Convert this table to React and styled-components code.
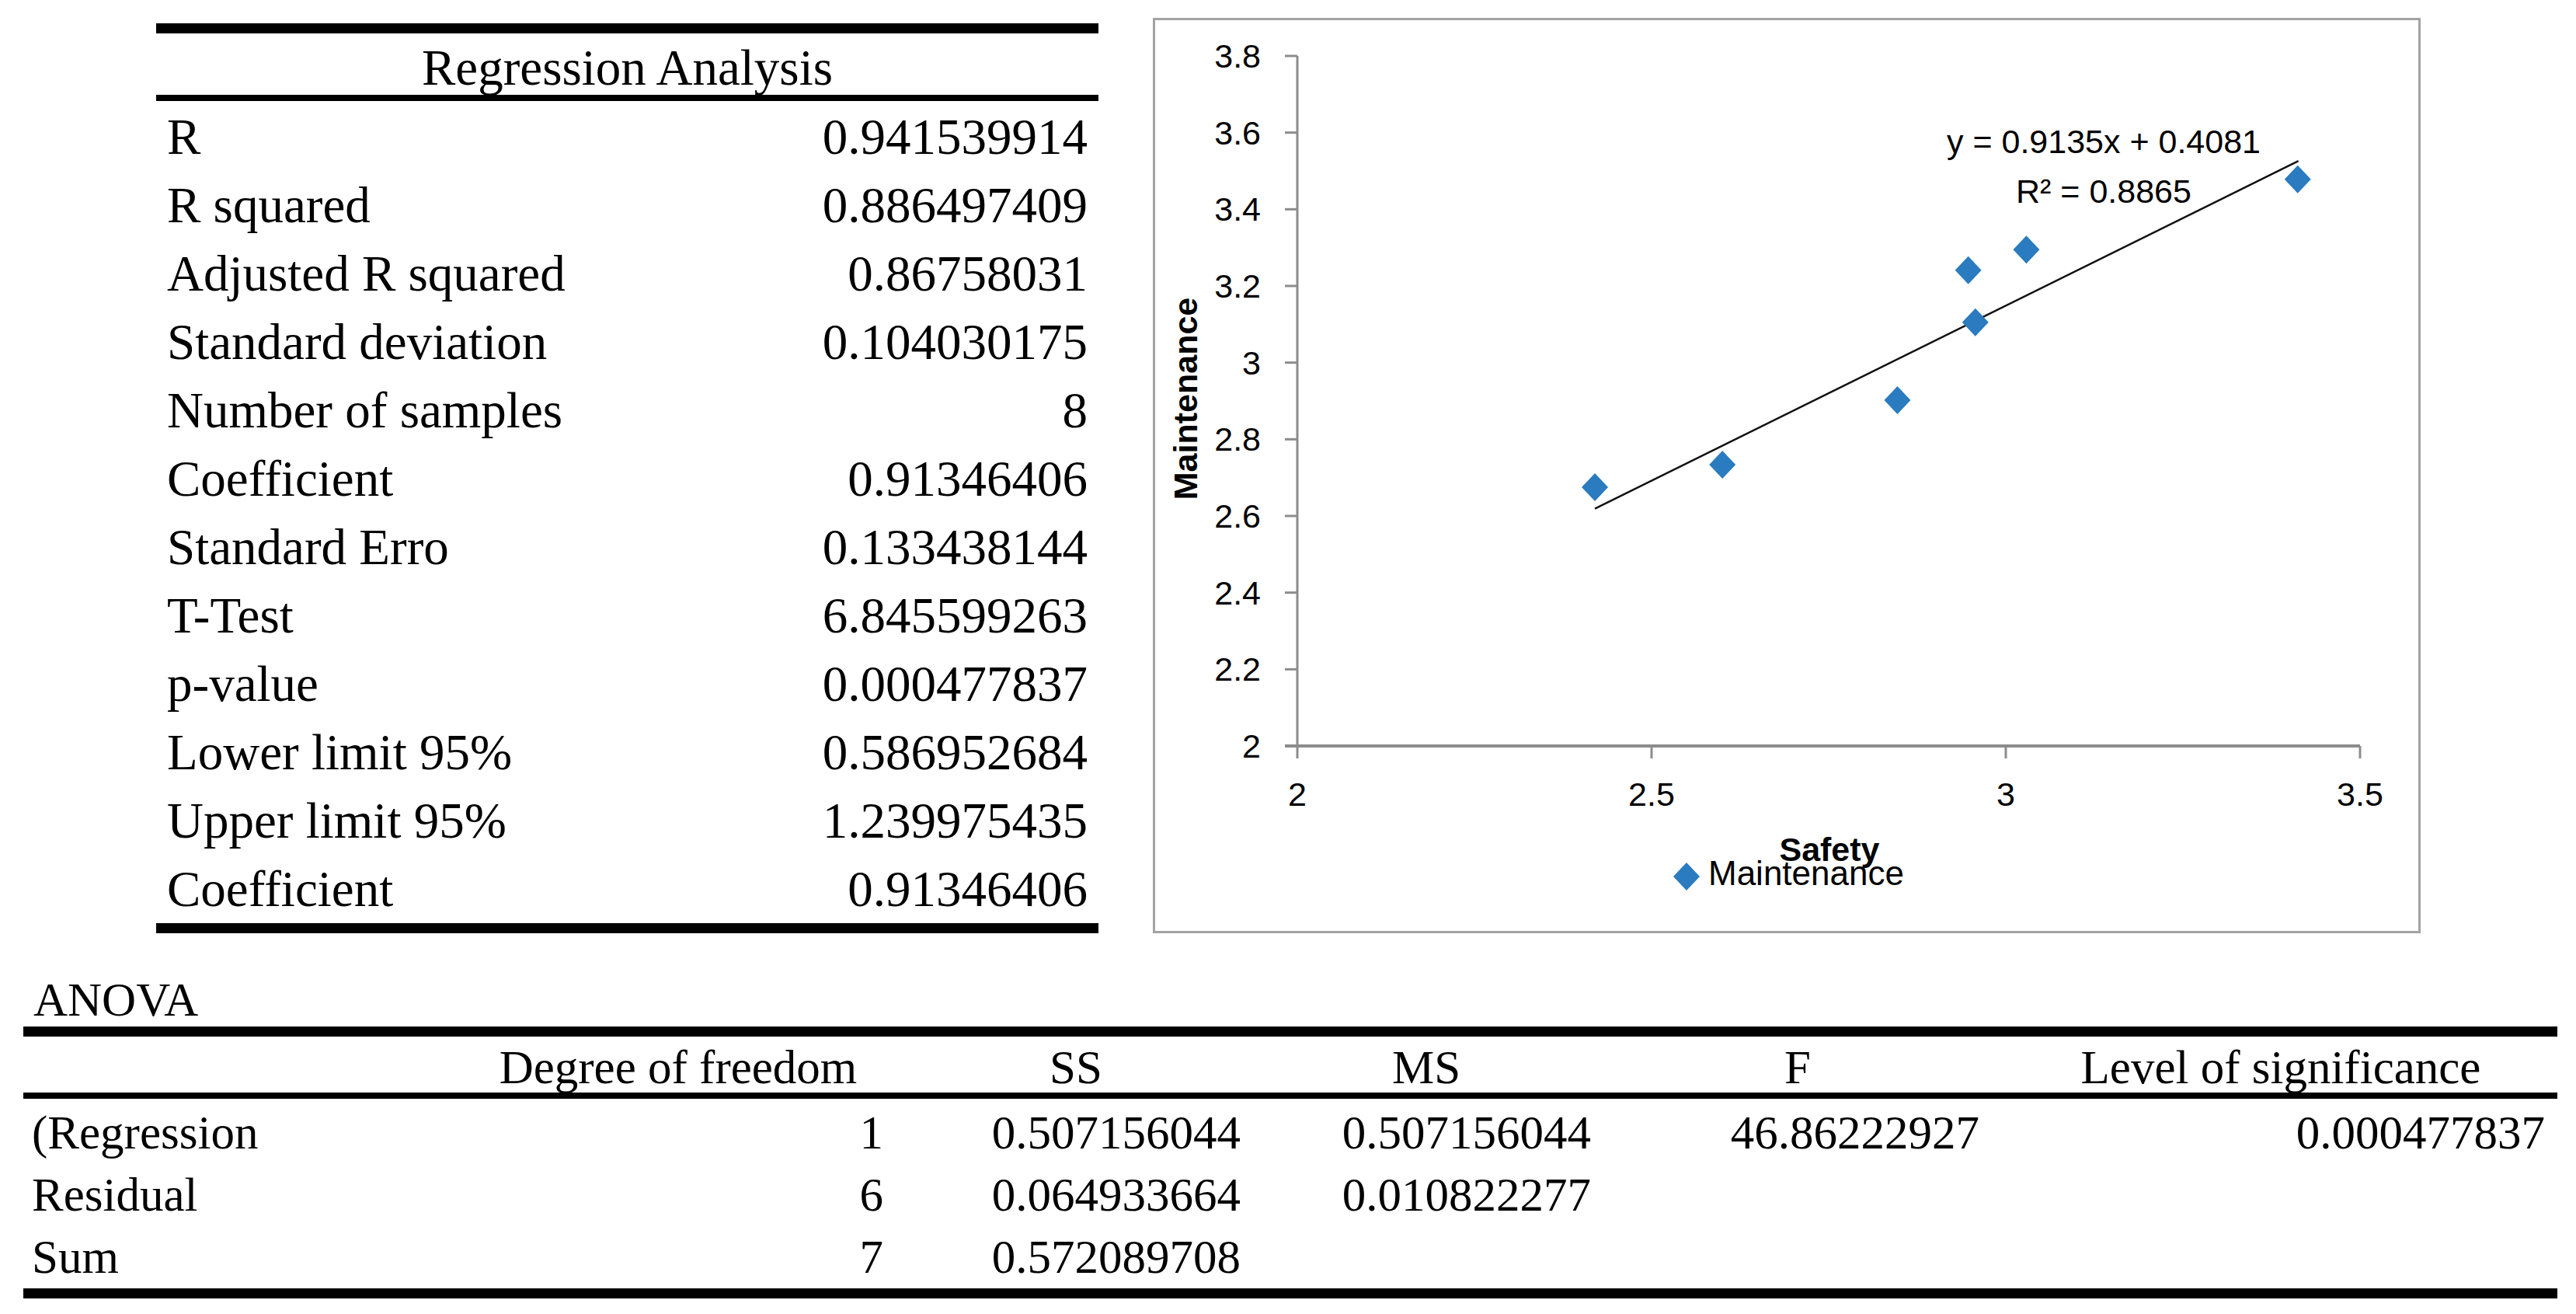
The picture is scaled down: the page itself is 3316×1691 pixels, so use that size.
import React from 'react';
import styled, { createGlobalStyle } from 'styled-components';

const GlobalStyle = createGlobalStyle`
  html, body {
    margin: 0;
    padding: 0;
    background: #ffffff;
  }
  body {
    width: 3316px;
    height: 1691px;
    overflow: hidden;
    font-family: "Liberation Serif", "Times New Roman", serif;
    color: #000000;
  }
`;

const Page = styled.div`
  width: 3316px;
  height: 1691px;
  box-sizing: border-box;
  padding-top: 23px;
  display: flex;
  flex-direction: column;
`;

const TopRow = styled.div`
  display: flex;
  align-items: flex-start;
  padding-left: 201px;
  gap: 70px;
`;

/* ---------- Regression table ---------- */

const RegTable = styled.div`
  width: 1213px;
  margin-top: 7px;
  border-top: 13px solid #000;
  border-bottom: 13px solid #000;
  font-size: 65px;
`;

const RegHeader = styled.div`
  padding-top: 10px;
  line-height: 69px;
  text-align: center;
  border-bottom: 8px solid #000;
  white-space: nowrap;
`;

const RegBody = styled.div`
  padding-top: 2px;
`;

const RegRow = styled.div`
  display: flex;
  justify-content: space-between;
  height: 88px;
  line-height: 88px;
  padding: 0 14px 0 14px;
  white-space: nowrap;
`;

/* ---------- Chart ---------- */

const ChartBox = styled.div`
  width: 1632px;
  height: 1178px;
  box-sizing: border-box;
  border: 3px solid #a3a3a3;
  background: #ffffff;
`;

const ChartSvg = styled.svg`
  display: block;
  width: 1626px;
  height: 1172px;
`;

const SvgText = styled.text`
  font-family: "Liberation Sans", Arial, sans-serif;
  font-size: ${(p) => p.$size || 43}px;
  font-weight: ${(p) => (p.$bold ? 700 : 400)};
  fill: #000000;
`;

/* ---------- ANOVA ---------- */

const AnovaTitle = styled.div`
  margin-top: 52px;
  padding-left: 43px;
  font-size: 61px;
  line-height: 68px;
`;

const AnovaTable = styled.div`
  margin-left: 30px;
  width: 3262px;
  border-top: 13px solid #000;
  border-bottom: 13px solid #000;
  font-size: 61px;
`;

const COLS = '570px 546px 478px 424px 532px 712px';

const AnovaHead = styled.div`
  display: grid;
  grid-template-columns: ${COLS};
  padding-top: 8px;
  line-height: 64px;
  border-bottom: 8px solid #000;
`;

const AnovaBody = styled.div`
  padding-top: 4px;
`;

const AnovaRow = styled.div`
  display: grid;
  grid-template-columns: ${COLS};
  line-height: 80px;
  height: 80px;
`;

const Cell = styled.div`
  white-space: nowrap;
  text-align: ${(p) => p.$align || 'right'};
  padding-left: ${(p) => p.$pl || 0}px;
  padding-right: ${(p) => p.$pr || 0}px;
`;

/* ---------- data ---------- */

const regRows = [
  ['R', '0.941539914'],
  ['R squared', '0.886497409'],
  ['Adjusted R squared', '0.86758031'],
  ['Standard deviation', '0.104030175'],
  ['Number of samples', '8'],
  ['Coefficient', '0.91346406'],
  ['Standard Erro', '0.133438144'],
  ['T-Test', '6.845599263'],
  ['p-value', '0.000477837'],
  ['Lower limit 95%', '0.586952684'],
  ['Upper limit 95%', '1.239975435'],
  ['Coefficient', '0.91346406'],
];

const anovaHeaders = ['', 'Degree of freedom', 'SS', 'MS', 'F', 'Level of significance'];
const valuePad = [0, 9, 27, 0, 32, 16];

const anovaRows = [
  ['(Regression', '1', '0.507156044', '0.507156044', '46.86222927', '0.000477837'],
  ['Residual', '6', '0.064933664', '0.010822277', '', ''],
  ['Sum', '7', '0.572089708', '', '', ''],
];

const points = [
  [2.42, 2.675],
  [2.6, 2.734],
  [2.847, 2.902],
  [2.947, 3.241],
  [2.957, 3.105],
  [3.029, 3.295],
  [3.412, 3.478],
];

const X = (v) => 1669 + (v - 2) * 912;
const Y = (v) => 960 - (v - 2) * (888 / 1.8);

const yTicks = [2, 2.2, 2.4, 2.6, 2.8, 3, 3.2, 3.4, 3.6, 3.8];
const xTicks = [2, 2.5, 3, 3.5];

const BLUE = '#2a7bbf';
const AXIS = '#8c8c8c';

const diamond = (cx, cy, r = 17) =>
  `M${cx} ${cy - r - 1} L${cx + r} ${cy} L${cx} ${cy + r + 1} L${cx - r} ${cy} Z`;

function Chart() {
  const tx1 = 2.42;
  const tx2 = 3.413;
  const f = (x) => 0.9135 * x + 0.4081;
  return (
    <ChartBox>
      <ChartSvg viewBox="1486 26 1626 1172">
        {/* axes */}
        <line x1={1669} y1={72} x2={1669} y2={960} stroke={AXIS} strokeWidth={3} />
        <line x1={1653} y1={960} x2={3037} y2={960} stroke={AXIS} strokeWidth={4} />
        {yTicks.map((t) => (
          <g key={'y' + t}>
            <line x1={1653} y1={Y(t)} x2={1669} y2={Y(t)} stroke={AXIS} strokeWidth={3} />
            <SvgText x={1622} y={Y(t) + 15} textAnchor="end">
              {String(t)}
            </SvgText>
          </g>
        ))}
        {xTicks.map((t) => (
          <g key={'x' + t}>
            <line x1={X(t)} y1={960} x2={X(t)} y2={976} stroke={AXIS} strokeWidth={3} />
            <SvgText x={X(t)} y={1037} textAnchor="middle">
              {String(t)}
            </SvgText>
          </g>
        ))}

        {/* trend line */}
        <line
          x1={X(tx1)}
          y1={Y(f(tx1))}
          x2={X(tx2)}
          y2={Y(f(tx2))}
          stroke="#111"
          strokeWidth={2.5}
        />

        {/* points */}
        {points.map(([a, b], i) => (
          <path key={i} d={diamond(X(a), Y(b))} fill={BLUE} />
        ))}

        {/* trend equation */}
        <SvgText x={2707} y={197} textAnchor="middle">
          y = 0.9135x + 0.4081
        </SvgText>
        <SvgText x={2707} y={261} textAnchor="middle">
          R² = 0.8865
        </SvgText>

        {/* axis titles */}
        <SvgText $bold x={2354} y={1108} textAnchor="middle">
          Safety
        </SvgText>
        <SvgText
          $bold
          x={0}
          y={0}
          textAnchor="middle"
          transform="translate(1540 513) rotate(-90)"
        >
          Maintenance
        </SvgText>

        {/* legend */}
        <path d={diamond(2170, 1128)} fill={BLUE} />
        <SvgText $size={44} x={2198} y={1139}>
          Maintenance
        </SvgText>
      </ChartSvg>
    </ChartBox>
  );
}

export default function App() {
  return (
    <>
      <GlobalStyle />
      <Page>
        <TopRow>
          <RegTable>
            <RegHeader>Regression Analysis</RegHeader>
            <RegBody>
              {regRows.map(([label, value], i) => (
                <RegRow key={i}>
                  <span>{label}</span>
                  <span>{value}</span>
                </RegRow>
              ))}
            </RegBody>
          </RegTable>
          <Chart />
        </TopRow>

        <AnovaTitle>ANOVA</AnovaTitle>
        <AnovaTable>
          <AnovaHead>
            {anovaHeaders.map((h, i) => (
              <Cell key={i} $align="center">
                {h}
              </Cell>
            ))}
          </AnovaHead>
          <AnovaBody>
            {anovaRows.map((row, r) => (
              <AnovaRow key={r}>
                {row.map((v, c) =>
                  c === 0 ? (
                    <Cell key={c} $align="left" $pl={11}>
                      {v}
                    </Cell>
                  ) : (
                    <Cell key={c} $pr={valuePad[c]}>
                      {v}
                    </Cell>
                  )
                )}
              </AnovaRow>
            ))}
          </AnovaBody>
        </AnovaTable>
      </Page>
    </>
  );
}
